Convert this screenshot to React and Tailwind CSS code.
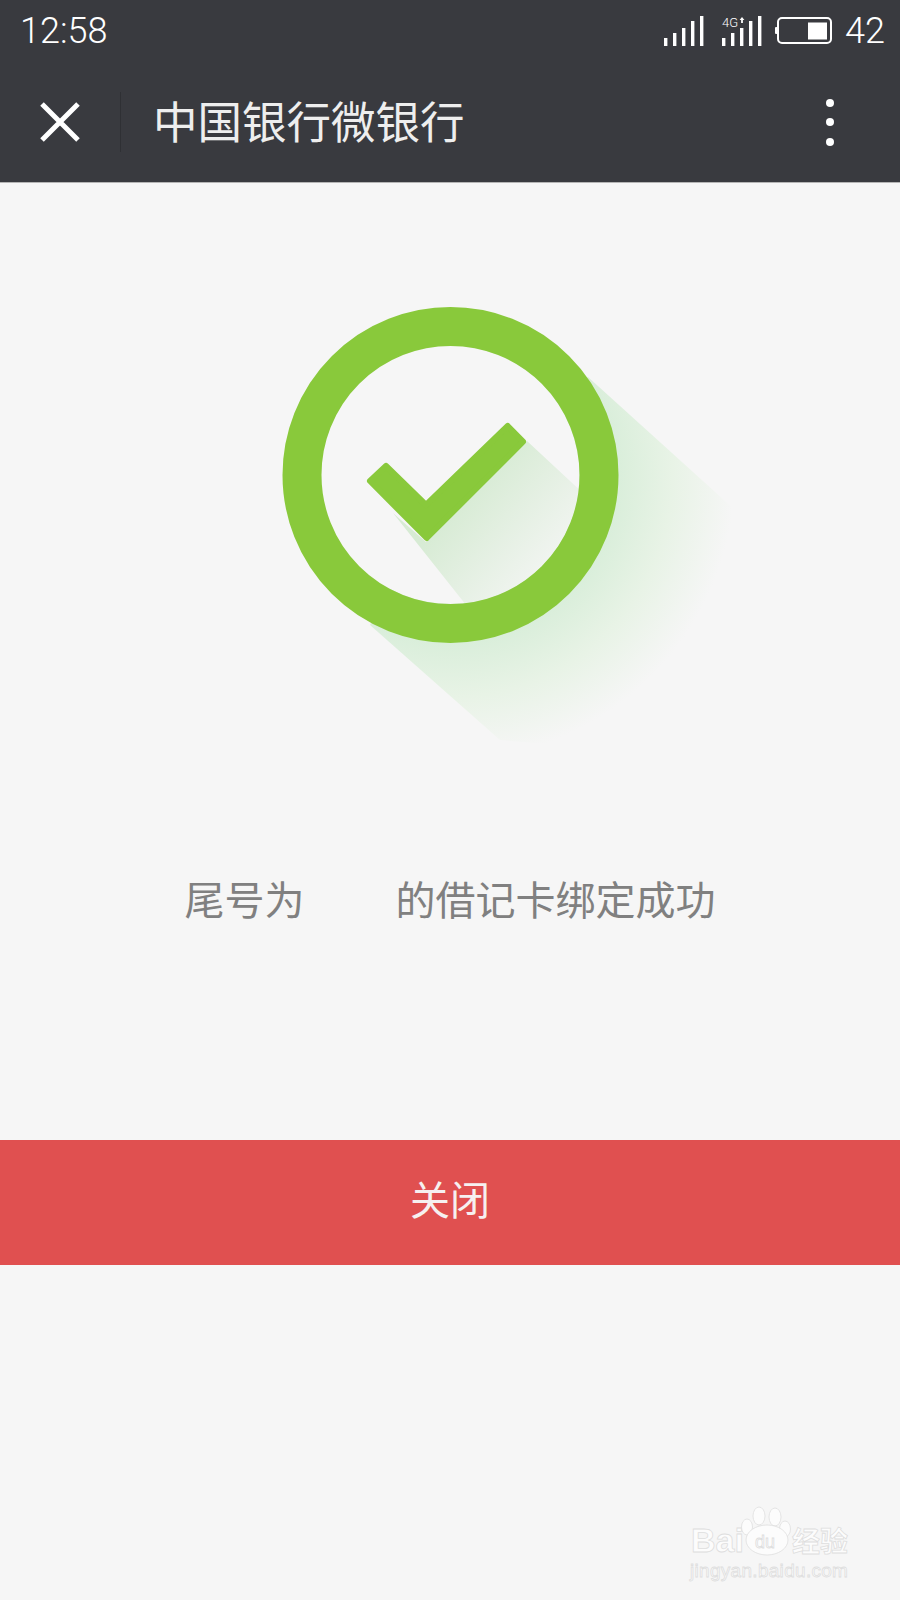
import React from "react";

const bars = [
  { x: 0, top: 22 },
  { x: 9, top: 17 },
  { x: 18, top: 12 },
  { x: 27, top: 5 },
  { x: 36, top: 0 },
];

const Signal = () => (
  <svg width="40" height="30" viewBox="0 0 40 30" fill="#fff">
    {bars.map((b) => (
      <rect key={b.x} x={b.x} y={b.top} width="3.4" height={30 - b.top} />
    ))}
  </svg>
);

const Signal4G = () => (
  <svg width="42" height="30" viewBox="0 0 42 30" fill="#fff">
    <text x="1" y="11" fontSize="13" fontFamily="Roboto, sans-serif">4G</text>
    <path d="M21 1l2.400 3h-1.500v3h-1.800V4h-1.500z" />
    {bars.map((b) => (
      <rect key={b.x} x={b.x + 1} y={Math.max(b.top, 12)} width="3.4" height={30 - Math.max(b.top, 12)} />
    ))}
    <rect x="28" y="5" width="3.400" height="7" />
    <rect x="37" y="0" width="3.400" height="12" />
  </svg>
);

const Battery = () => (
  <svg width="58" height="30" viewBox="0 0 58 30">
    <rect x="0" y="11" width="2.500" height="7" rx="1" fill="#fff" />
    <rect x="3" y="2" width="53" height="25" rx="4" fill="none" stroke="#fff" strokeWidth="2" />
    <rect x="33" y="6.500" width="19" height="17" fill="#fff" />
  </svg>
);

// big check badge with the long shadow, coordinates are page pixels
const SuccessIcon = () => (
  <svg width="500" height="470" viewBox="200 290 500 470" className="mx-auto block overflow-visible">
    <defs>
      <radialGradient id="bigShadow" gradientUnits="userSpaceOnUse" cx="450" cy="475" r="285">
        <stop offset="0.58" stopColor="#d9eeda" />
        <stop offset="0.78" stopColor="#e8f3e6" />
        <stop offset="1" stopColor="#f6f6f6" />
      </radialGradient>
      <linearGradient id="smallShadow" gradientUnits="userSpaceOnUse" x1="450" y1="510" x2="550" y2="595">
        <stop offset="0" stopColor="#d7ebd4" />
        <stop offset="1" stopColor="#f6f6f6" />
      </linearGradient>
      <clipPath id="innerDisc">
        <circle cx="450.500" cy="475" r="129" />
      </clipPath>
    </defs>
    <polygon points="588,377 735,510 735,640 620,750 500,740 370,625 450,475" fill="url(#bigShadow)" />
    <circle cx="450.500" cy="475" r="129" fill="#f6f6f6" />
    <polygon
      points="527,441 585,495 585,610 470,610 393,513 426,542"
      fill="url(#smallShadow)"
      clipPath="url(#innerDisc)"
    />
    <circle cx="450.500" cy="475" r="148.500" fill="none" stroke="#89c93b" strokeWidth="39" />
    <polygon
      points="386,466 370,481 426.700,538 523,441.700 507.700,426 426,505"
      fill="#89c93b"
      stroke="#89c93b"
      strokeWidth="6"
      strokeLinejoin="round"
    />
  </svg>
);

const Watermark = () => (
  <svg
    width="170"
    height="80"
    viewBox="0 0 170 80"
    className="absolute left-[688px] top-[1505px]"
    fill="#fcfcfc"
    stroke="#dedede"
    strokeWidth="0.8"
  >
    <text x="3" y="47" fontSize="34" fontWeight="700" fontFamily="Liberation Sans, sans-serif">Bai</text>
    <ellipse cx="71" cy="11" rx="6" ry="9" />
    <ellipse cx="87" cy="12" rx="6" ry="9" />
    <ellipse cx="59" cy="22" rx="5.500" ry="8" />
    <ellipse cx="97" cy="24" rx="5.500" ry="8" />
    <ellipse cx="79" cy="35" rx="21" ry="15" />
    <text x="67" y="43" fontSize="18" fontFamily="Liberation Sans, sans-serif">du</text>
    <text x="104" y="47" fontSize="28" fontWeight="700" fontFamily="Noto Sans CJK SC, sans-serif">经验</text>
    <text x="2" y="72" fontSize="19" letterSpacing="0.3" fontFamily="Liberation Sans, sans-serif">jingyan.baidu.com</text>
  </svg>
);

const App = () => {
  return (
    <div className="relative h-[1600px] overflow-hidden bg-[#f6f6f6] font-['Roboto','Noto_Sans_CJK_SC',sans-serif]">
      {/* Header */}
      <div className="bg-[#393a3f] border-b border-[#b5b5b5] h-[183px]">
        <div className="h-[62px] flex items-center pl-5 pr-[15px] text-white text-[36px] font-light">
          <span className="leading-none">12:58</span>
          <div className="ml-auto flex items-center">
            <Signal />
            <div className="ml-[17px]"><Signal4G /></div>
            <div className="ml-3"><Battery /></div>
            <span className="ml-3 leading-none">42</span>
          </div>
        </div>
        <div className="h-[120px] flex items-center text-[#eeeeee]">
          <svg width="40" height="40" viewBox="0 0 40 40" className="ml-10" stroke="#fff" strokeWidth="5" fill="none">
            <path d="M2 2l36 36M38 2L2 38" />
          </svg>
          <div className="ml-10 w-px h-[60px] bg-[#2f3034]" />
          <h1 className="ml-[32px] mt-1 text-[44.500px] leading-none">中国银行微银行</h1>
          <div className="ml-auto mr-[66px] flex flex-col gap-[11.500px]">
            <span className="w-2 h-2 rounded-full bg-white" />
            <span className="w-2 h-2 rounded-full bg-white" />
            <span className="w-2 h-2 rounded-full bg-white" />
          </div>
        </div>
      </div>

      {/* Result */}
      <div className="mt-[107px]">
        <SuccessIcon />
      </div>
      <p className="mt-[112px] flex justify-center text-[40px] leading-[60px] text-[#808080]">
        <span>尾号为</span>
        <span className="ml-[91px]">的借记卡绑定成功</span>
      </p>

      <button className="mt-[208px] w-full h-[125px] pb-[2px] bg-[#e05050] text-[#f6f0f0] text-[40px]">
        关闭
      </button>

      <Watermark />
    </div>
  );
};

export default App;
